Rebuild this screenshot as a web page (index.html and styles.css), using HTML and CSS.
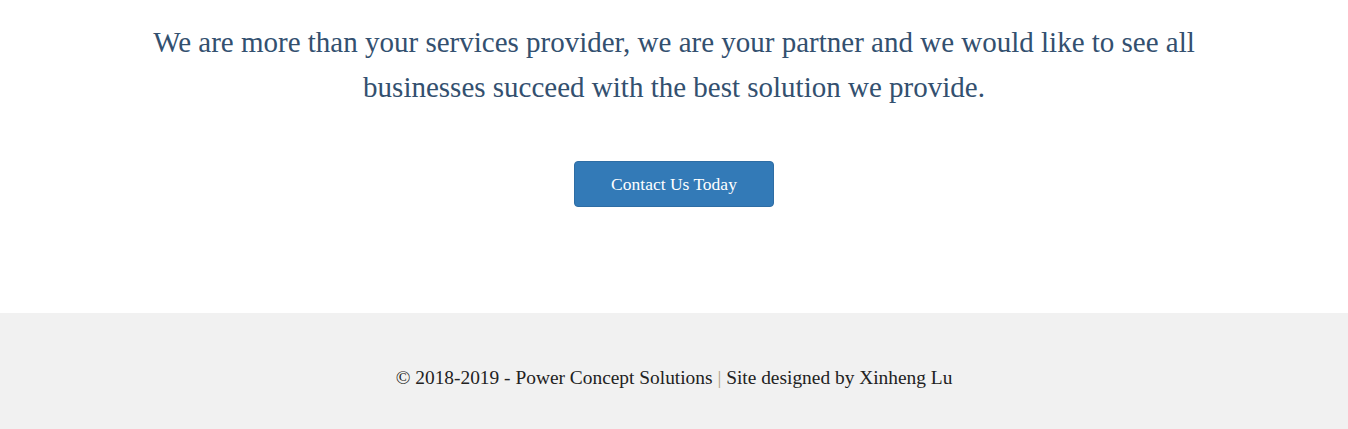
FILE: index.html
```html
<!DOCTYPE html>
<html lang="en">
<head>
<meta charset="utf-8">
<title>Power Concept Solutions</title>
<link rel="stylesheet" href="styles.css">
</head>
<body>
<section class="cta">
  <p class="cta-text">We are more than your services provider, we are your partner and we would like to see all businesses succeed with the best solution we provide.</p>
  <a class="btn" href="#">Contact Us Today</a>
</section>
<footer class="footer">
  <p class="footer-text">© 2018-2019 - Power Concept Solutions <span class="sep">|</span> Site designed by Xinheng Lu</p>
</footer>
</body>
</html>
```
FILE: styles.css
```css
html, body {
  margin: 0;
  padding: 0;
  background: #ffffff;
  font-family: "Liberation Serif", "Times New Roman", serif;
}
.cta {
  display: flex;
  flex-direction: column;
  align-items: center;
  padding: 20px 0 106px;
}
.cta-text {
  margin: 0;
  max-width: 1100px;
  font-size: 29px;
  line-height: 45px;
  color: #33506f;
  text-align: center;
}
.btn {
  margin-top: 51px;
  box-sizing: border-box;
  width: 200px;
  height: 46px;
  display: flex;
  align-items: center;
  justify-content: center;
  background: #337ab7;
  border: 1px solid #2e6da4;
  border-radius: 4px;
  color: #ffffff;
  text-decoration: none;
  font-size: 17.5px;
}
.footer {
  background: #f1f1f1;
  height: 116px;
  display: flex;
  align-items: center;
  justify-content: center;
}
.footer-text {
  margin: 0;
  padding-top: 13px;
  font-size: 19.4px;
  color: #222222;
}
.sep {
  color: #b0a080;
}
```
